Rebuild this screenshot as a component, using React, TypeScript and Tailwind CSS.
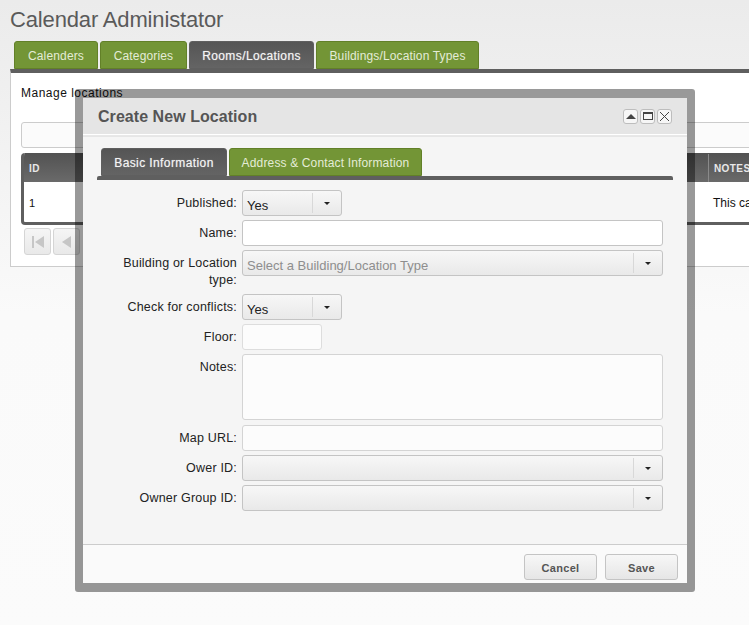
const topTabs = [
  { name: 'Calenders', width: 'w-[84px]' },
  { name: 'Categories', width: 'w-[87px]' },
  { name: 'Rooms/Locations', width: 'w-[125px]', active: true },
  { name: 'Buildings/Location Types', width: 'w-[163px]' },
];

const modalTabs = [
  { name: 'Basic Information', width: 'w-[126px]', active: true },
  { name: 'Address & Contact Information', width: 'w-[193px]' },
];

function Tab({ name, width, active }: { name: string; width: string; active?: boolean }) {
  return (
    <div
      className={`h-7 pt-px rounded-t-[3px] border flex items-center justify-center text-[12px] ${width} ${
        active
          ? 'border-[#5f5f5f] bg-gradient-to-b from-[#555555] to-[#646464] text-[#f4f4f4] tracking-[0.4px] [text-shadow:0_0_1px_#ffffff88]'
          : 'border-[#628028] bg-[#739536] text-[#e4ecd6] tracking-[0.15px]'
      }`}
    >
      {name}
    </div>
  );
}

function Caret() {
  return <span className="w-0 h-0 border-x-[3px] border-x-transparent border-t-[3px] border-t-[#222222]" />;
}

function Select({ value, placeholder, className }: { value?: string; placeholder?: boolean; className: string }) {
  return (
    <div className={`h-[26px] rounded-[3px] border border-[#c4c4c4] bg-gradient-to-b from-[#f7f7f7] to-[#e9e9e9] flex items-center ${className}`}>
      <span className={`flex-1 pl-1 pt-1 text-[13px] leading-[15px] truncate ${placeholder ? 'text-[#8e8e8e]' : 'text-[#222222]'}`}>{value}</span>
      <span className="w-[29px] h-5 border-l border-[#d8d8d8] flex items-center justify-center shrink-0">
        <Caret />
      </span>
    </div>
  );
}

function Input({ className }: { className: string }) {
  return <div className={`rounded-[3px] border bg-[#fcfcfc] ${className}`} />;
}

function Row({ label, top, children }: { label: string; top: string; children: React.ReactNode }) {
  return (
    <div className={`flex gap-[5px] items-start ${top}`}>
      <div className="w-[136px] shrink-0 text-right text-[12.5px] leading-[17px] tracking-[0.2px] text-[#222222] pt-[5px]">{label}</div>
      {children}
    </div>
  );
}

function WinButton({ children }: { children: React.ReactNode }) {
  return (
    <div className="w-[15px] h-[15px] rounded-[3px] border border-[#bdbdbd] bg-[#f6f6f6] flex items-center justify-center">
      {children}
    </div>
  );
}

export default function App() {
  return (
    <div
      className="relative h-[625px] overflow-hidden bg-gradient-to-b from-[#ebebeb] via-[#fafafa] via-50% to-[#fbfbfb]"
      style={{ fontFamily: '"Liberation Sans", Arial, sans-serif' }}
    >
      <div className="pl-[10px] pt-[6px] h-[41px] text-[22px] leading-[28px] tracking-[-0.15px] text-[#5a5a5a]">Calendar Administator</div>

      <div className="pl-[14px] flex gap-[2px]">
        {topTabs.map((tab) => (
          <Tab key={tab.name} {...tab} />
        ))}
      </div>

      <div className="ml-[10px] h-[198px] border-t-4 border-t-[#5f5f5f] border-l border-b border-[#cccccc] bg-white">
        <div className="pl-[10px] pt-[12px] text-[12px] leading-4 tracking-[0.5px] text-[#111111]">Manage locations</div>
        <div className="ml-[10px] mt-[21px] h-[26px] w-[800px] rounded-[3px] border border-[#cccccc] bg-[#fbfbfb]" />

        <div className="ml-[10px] mt-[5px] w-[800px] h-[72px] rounded-[4px] border-x-[3px] border-b-[3px] border-[#5f5f5f] overflow-hidden">
          <div className="-mx-[3px] h-[29px] pt-px bg-gradient-to-b from-[#525252] to-[#6a6a6a] flex items-center text-[10px] font-bold tracking-[0.4px] text-[#e8e8e8]">
            <span className="w-[687px] pl-[8px]">ID</span>
            <span className="h-full border-l border-[#8a8a8a] pl-[5px] flex items-center">NOTES</span>
          </div>
          <div className="h-10 pt-0.5 flex items-center text-[12px] text-[#111111]">
            <span className="w-[689px] shrink-0 pl-[5px] text-[11px]">1</span>
            <span className="whitespace-nowrap">This can</span>
          </div>
        </div>

        <div className="ml-[13px] mt-[3px] flex gap-[2px]">
          <div className="w-[27px] h-[27px] rounded-[3px] border border-[#d5d5d5] bg-gradient-to-b from-[#f5f5f5] to-[#e9e9e9] flex items-center justify-center">
            <svg width="14" height="14" viewBox="0 0 14 14" fill="#c6c6c6">
              <rect x="1" y="1" width="2" height="12" />
              <path d="M13 1V13L4 7Z" />
            </svg>
          </div>
          <div className="w-[27px] h-[27px] rounded-[3px] border border-[#d5d5d5] bg-gradient-to-b from-[#f5f5f5] to-[#e9e9e9] flex items-center justify-center">
            <svg width="14" height="14" viewBox="0 0 14 14" fill="#c6c6c6">
              <path d="M11 1V13L2 7Z" />
            </svg>
          </div>
        </div>
      </div>

      {/* modal window, border is see-through */}
      <div className="absolute left-[75px] top-[89px] w-[620px] h-[503px] rounded-[3px] border-x-8 border-t-[9px] border-b-[9px] border-black/40 bg-clip-padding">
        <div className="h-full bg-[#f5f5f5] flex flex-col">
          <div className="h-[36px] bg-[#e5e5e5] flex items-center pl-[15px] pr-[15px] justify-between">
            <span className="pt-px text-[16px] tracking-[0.05px] font-bold text-[#555555]">Create New Location</span>
            <div className="flex gap-[2px]">
              <WinButton>
                <span className="w-0 h-0 border-x-[5px] border-x-transparent border-b-[5px] border-b-[#444444]" />
              </WinButton>
              <WinButton>
                <span className="w-[10px] h-[8px] border border-t-2 border-[#444444]" />
              </WinButton>
              <WinButton>
                <svg width="11" height="11" viewBox="0 0 11 11" stroke="#444444" strokeWidth="1">
                  <path d="M1 1L10 10M10 1L1 10" />
                </svg>
              </WinButton>
            </div>
          </div>
          <div className="h-[3px] border-y border-y-white bg-[#e8e8e8] mb-[11px] border-b-[#e6e6e6]" />

          <div className="pl-[18px] flex gap-[2px]">
            {modalTabs.map((tab) => (
              <Tab key={tab.name} {...tab} />
            ))}
          </div>
          <div className="ml-[14px] w-[576px] h-1 bg-[#5f5f5f] rounded-t-[2px]" />

          <div className="pl-[18px] flex-1">
            <Row label="Published:" top="mt-[10px]">
              <Select value="Yes" className="w-[100px]" />
            </Row>
            <Row label="Name:" top="mt-[4px]">
              <Input className="w-[421px] h-[26px] border-[#c4c4c4] bg-white" />
            </Row>
            <Row label="Building or Location type:" top="mt-[4px]">
              <Select value="Select a Building/Location Type" placeholder className="w-[421px]" />
            </Row>
            <Row label="Check for conflicts:" top="mt-[5px]">
              <Select value="Yes" className="w-[100px]" />
            </Row>
            <Row label="Floor:" top="mt-[4px]">
              <Input className="w-[80px] h-[26px] border-[#dddddd]" />
            </Row>
            <Row label="Notes:" top="mt-[4px]">
              <Input className="w-[421px] h-[66px] border-[#d4d4d4]" />
            </Row>
            <Row label="Map URL:" top="mt-[5px]">
              <Input className="w-[421px] h-[26px] border-[#d4d4d4]" />
            </Row>
            <Row label="Ower ID:" top="mt-[4px]">
              <Select className="w-[421px]" />
            </Row>
            <Row label="Owner Group ID:" top="mt-[4px]">
              <Select className="w-[421px]" />
            </Row>
          </div>

          <div className="h-[39px] border-t border-[#cccccc] bg-[#fafafa] flex justify-end items-start gap-[8px] pr-[9px] pt-[9px]">
            {['Cancel', 'Save'].map((label) => (
              <div
                key={label}
                className="w-[73px] h-[26px] pt-[2px] rounded-[3px] border border-[#c4c4c4] bg-gradient-to-b from-[#f7f7f7] to-[#e6e6e6] flex items-center justify-center text-[11px] font-bold tracking-[0.3px] text-[#555555]"
              >
                {label}
              </div>
            ))}
          </div>
        </div>
      </div>
    </div>
  );
}
